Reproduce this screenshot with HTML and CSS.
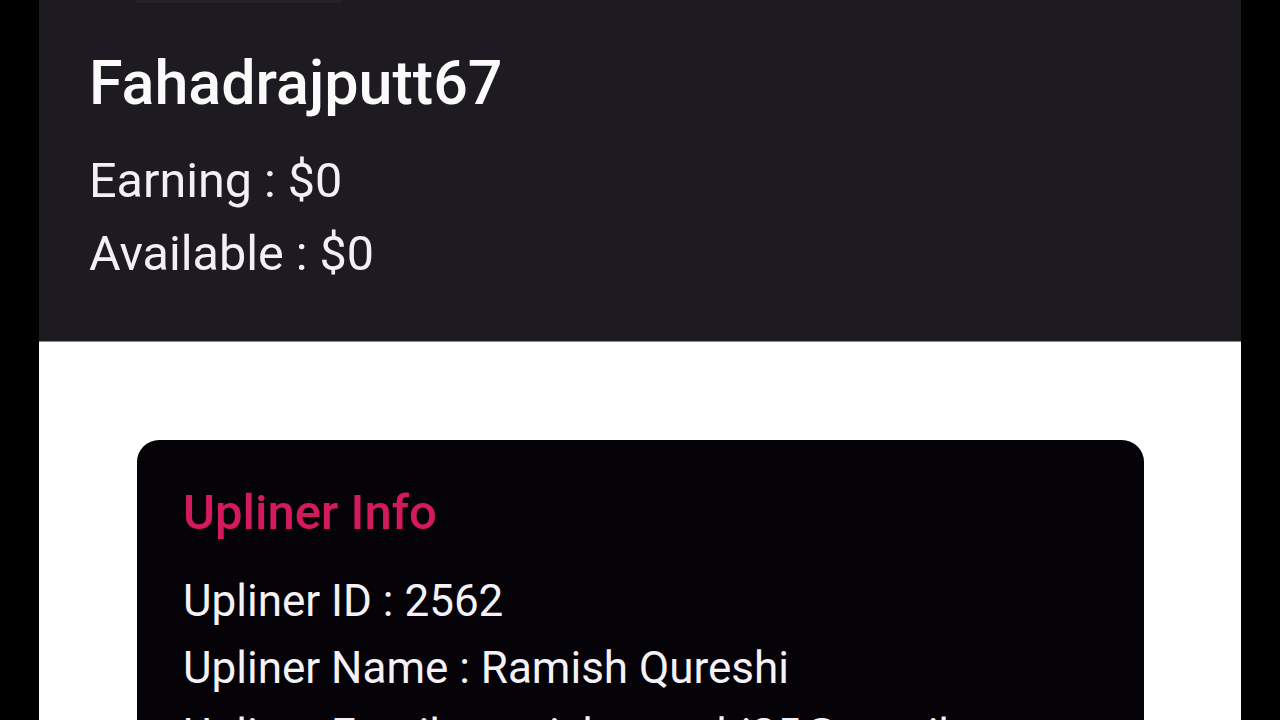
FILE: index.html
```html
<!DOCTYPE html>
<html>
<head>
<meta charset="utf-8">
<link rel="stylesheet" href="styles.css">
</head>
<body>
<div class="frame">
  <header class="profile">
    <div class="top-strip"></div>
    <h1 class="username">Fahadrajputt67</h1>
    <p class="stat">Earning : $0</p>
    <p class="stat">Available : $0</p>
  </header>
  <main class="content">
    <section class="card">
      <h2 class="card-title">Upliner Info</h2>
      <p class="info">Upliner ID : 2562</p>
      <p class="info">Upliner Name : Ramish Qureshi</p>
      <p class="info">Upliner Email : ramishqureshi25@gmail.com</p>
    </section>
  </main>
</div>
</body>
</html>
```
FILE: styles.css
```css
html, body {
  margin: 0;
  padding: 0;
  background: #000;
  height: 720px;
  overflow: hidden;
}
body {
  font-family: Roboto, "Noto Sans", sans-serif;
}
.frame {
  width: 1202px;
  margin: 0 auto;
  height: 720px;
  overflow: hidden;
  background: #fff;
}
.profile {
  background: #1e1a22;
  height: 342px;
  box-sizing: border-box;
  padding: 0 0 0 50px;
  border-bottom: 1px solid #8a8890;
  display: flex;
  flex-direction: column;
}
.top-strip {
  width: 205px;
  height: 3px;
  margin-left: 47px;
  background: #252129;
}
.username {
  margin: 40px 0 0 0;
  font-size: 61px;
  font-weight: 500;
  color: #fafafa;
  line-height: 80px;
}
.stat {
  margin: 0;
  font-size: 48.5px;
  font-weight: 400;
  color: #f2f0f4;
  line-height: 73px;
}
.stat:first-of-type {
  margin-top: 21px;
}
.content {
  padding: 98px 97px 0 98px;
}
.card {
  background: #050208;
  border-radius: 22px;
  padding: 40px 46px 40px 46px;
  height: 400px;
}
.card-title {
  margin: 0;
  font-size: 49px;
  font-weight: 500;
  color: #d41a5c;
  line-height: 66px;
}
.info {
  margin: 0;
  font-size: 44px;
  color: #f4f2f6;
  line-height: 67px;
  white-space: nowrap;
}
.card-title + .info {
  margin-top: 22px;
}
```
